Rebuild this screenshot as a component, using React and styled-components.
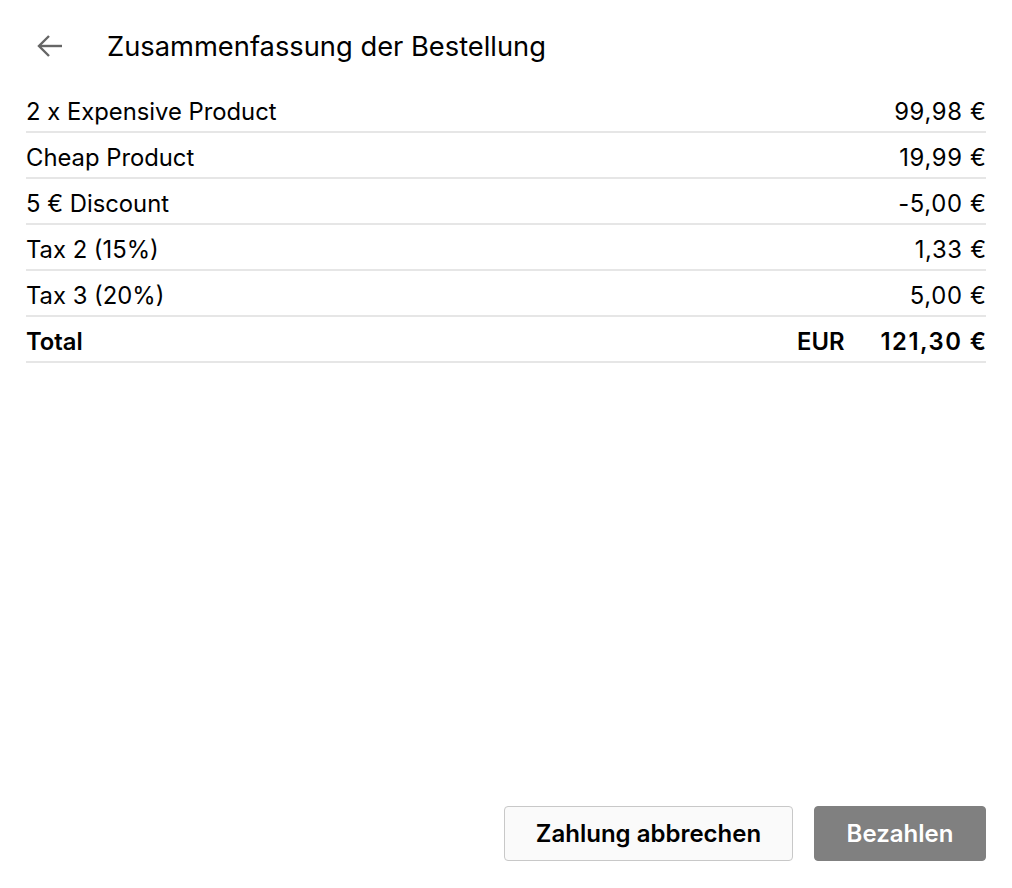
import React from 'react';
import styled, {createGlobalStyle} from 'styled-components';

const GlobalStyle = createGlobalStyle`
  html, body {
    margin: 0;
    padding: 0;
    background: #fff;
  }
  body {
    font-family: "Inter", "Liberation Sans", sans-serif;
    color: #000;
  }
`

const Page = styled.div`
  display: flex;
  flex-direction: column;
  min-height: 100vh;
  box-sizing: border-box;
  padding: 0 26px 27px;
`

const Header = styled.div`
  display: flex;
  align-items: center;
  height: 40px;
  padding-top: 26px;
  margin-bottom: 21px;
`

const BackButton = styled.button`
  display: flex;
  align-items: center;
  justify-content: center;
  width: 48px;
  height: 40px;
  padding: 0;
  margin-right: 33px;
  border: none;
  background: none;
  cursor: pointer;
`

const Title = styled.h1`
  margin: 0;
  font-size: 27.3px;
  font-weight: 400;
`

const Row = styled.div`
  display: flex;
  align-items: center;
  box-sizing: border-box;
  height: 46px;
  padding-top: 5px;
  border-bottom: 2px solid #e6e6e6;
  font-size: 23.8px;
  font-weight: ${p => p.bold ? 600 : 400};
`

const Label = styled.div`
  flex: 1;
`

const Currency = styled.div`
  margin-right: 36px;
`

const Amount = styled.div`
  text-align: right;
  letter-spacing: ${p => p.bold ? 1.5 : 0.7}px;
  margin-right: ${p => p.bold ? -1.5 : -0.7}px;
`

const Footer = styled.div`
  display: flex;
  justify-content: flex-end;
  gap: 21px;
  margin-top: auto;
`

const Button = styled.button`
  height: 55px;
  padding: 0 24px;
  min-width: ${p => p.primary ? 172 : 289}px;
  border-radius: 4px;
  font-family: inherit;
  font-size: 24px;
  font-weight: 600;
  cursor: pointer;
  border: 1px solid ${p => p.primary ? '#808080' : '#c8c8c8'};
  background: ${p => p.primary ? '#808080' : '#fafafa'};
  color: ${p => p.primary ? '#fff' : '#000'};
`

const lines = [
  {label: '2 x Expensive Product', amount: '99,98 €'},
  {label: 'Cheap Product', amount: '19,99 €'},
  {label: '5 € Discount', amount: '-5,00 €'},
  {label: 'Tax 2 (15%)', amount: '1,33 €'},
  {label: 'Tax 3 (20%)', amount: '5,00 €'},
]

const App = () => {
  return (
    <Page>
      <GlobalStyle/>
      <Header>
        <BackButton>
          <svg width="30" height="24" viewBox="0 0 30 24" fill="none" stroke="#666" strokeWidth="2.4">
            <path d="M27 12H4"/>
            <path d="M14 2L4 12l10 10"/>
          </svg>
        </BackButton>
        <Title>Zusammenfassung der Bestellung</Title>
      </Header>

      {lines.map(line => (
        <Row key={line.label}>
          <Label>{line.label}</Label>
          <Amount>{line.amount}</Amount>
        </Row>
      ))}
      <Row bold>
        <Label>Total</Label>
        <Currency>EUR</Currency>
        <Amount bold>121,30 €</Amount>
      </Row>

      <Footer>
        <Button>Zahlung abbrechen</Button>
        <Button primary>Bezahlen</Button>
      </Footer>
    </Page>
  );
};

export default App;
